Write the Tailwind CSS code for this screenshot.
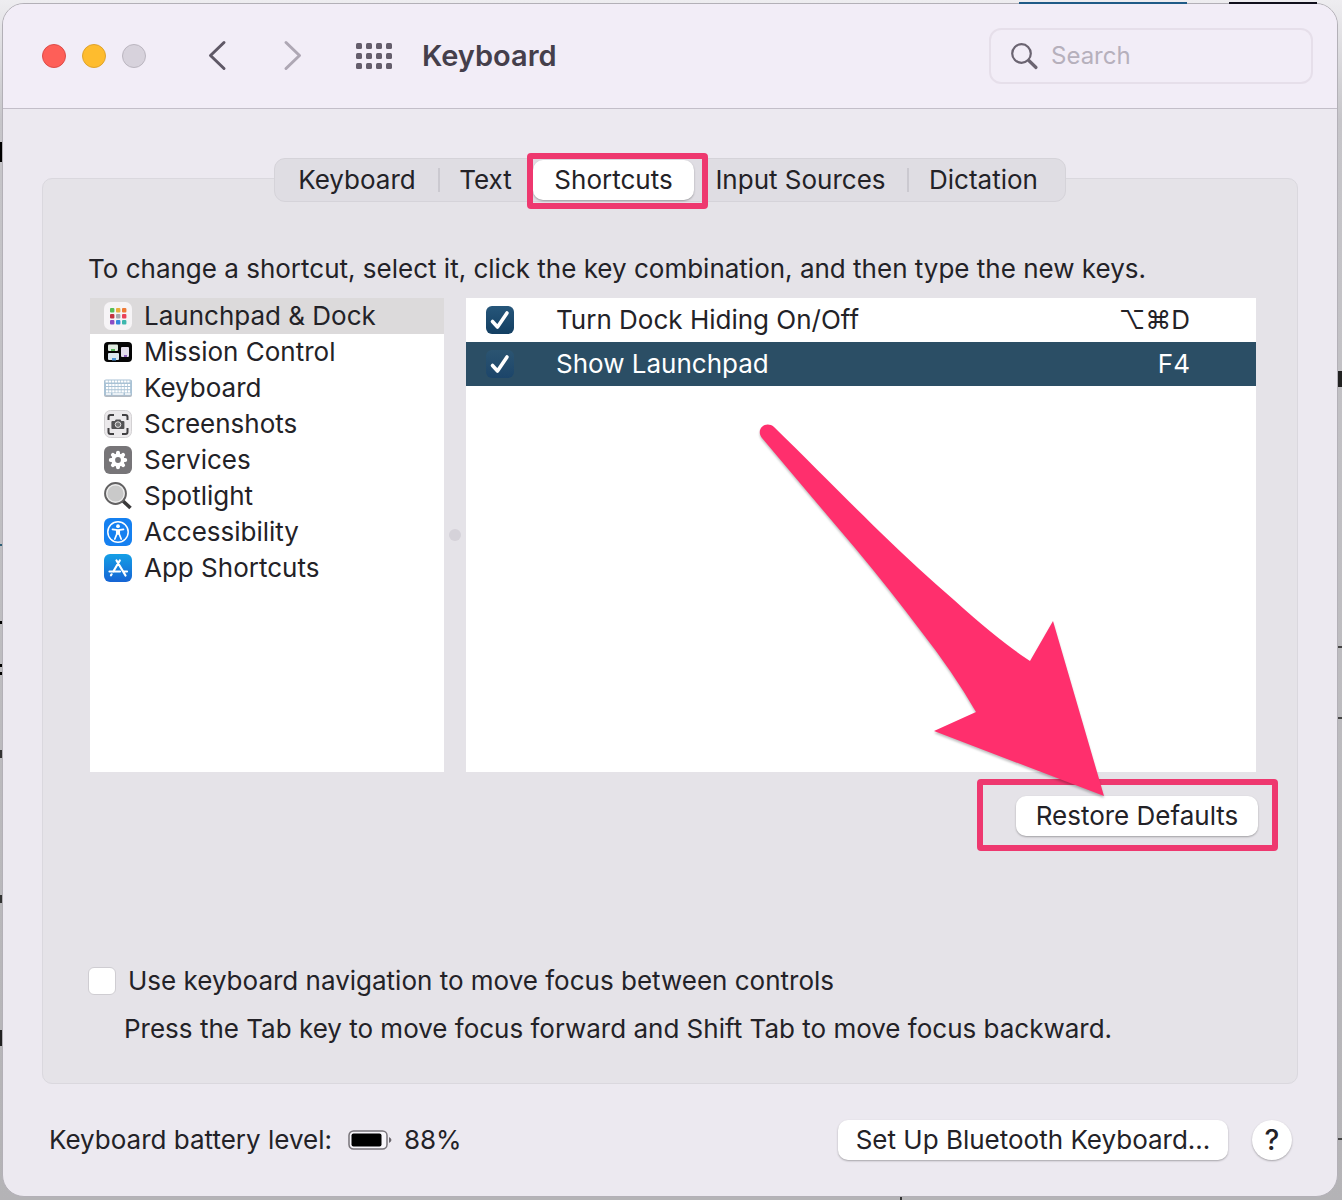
<!DOCTYPE html>
<html lang="en">
<head>
    <meta charset="UTF-8">
    <meta name="viewport" content="width=device-width, initial-scale=1.0">
    <title>Keyboard</title>
    <script src="https://cdn.jsdelivr.net/npm/@tailwindcss/browser@4"></script>
</head>
<body class="relative flex min-h-screen flex-col overflow-x-hidden bg-linear-to-b from-[#eeedf0] from-0% via-[#c6c5c9] via-10% to-[#b4b3b6] pt-[3px] pr-1 pb-[3px] pl-[2px] font-[Inter,sans-serif] text-[26px]/8 text-[#232227]">
    <!-- windows lying behind this one -->
    <div class="absolute top-[2px] right-[155px] z-10 h-[2px] w-[168px] bg-[#1f5b87]"></div>
    <div class="absolute top-[2px] right-[25px] z-10 h-[2px] w-[88px] bg-[#11101c]"></div>
    <div class="absolute top-[142px] left-0 h-5 w-1 bg-black"></div>
    <div class="absolute top-[544px] left-0 h-[2px] w-1 bg-[#2f6078]"></div>
    <div class="absolute top-[621px] left-0 h-[3px] w-1 bg-black"></div>
    <div class="absolute top-[664px] left-0 h-[11px] w-1 border-y-3 border-black"></div>
    <div class="absolute top-[750px] left-0 h-2 w-1 bg-[#333]"></div>
    <div class="absolute top-[895px] left-0 h-2 w-1 bg-[#333]"></div>
    <div class="absolute top-[1030px] left-0 h-4 w-1 bg-[#222]"></div>
    <div class="absolute top-[371px] right-0 h-4 w-1 bg-[#222]"></div>
    <div class="absolute top-[646px] right-0 h-[73px] w-1 border-y-2 border-[#444]"></div>
    <div class="absolute top-[1138px] right-0 h-[2px] w-1 bg-[#444]"></div>
    <div class="absolute bottom-0 left-[900px] h-1 w-[2px] bg-[#333]"></div>

    <div class="relative flex grow flex-col rounded-[22px] border border-[#b3b0b7] bg-[#ece9f0]">
        <header class="flex h-[105px] items-center rounded-t-[21px] border-b border-[#c3bec9] bg-[#f2edf7] pr-6 pl-[39px]">
            <div class="flex gap-4">
                <button class="size-6 rounded-full border border-[#dd4b48] bg-[#fe5f58]" aria-label="Close"></button>
                <button class="size-6 rounded-full border border-[#dfa32c] bg-[#febc2e]" aria-label="Minimize"></button>
                <button class="size-6 rounded-full border border-[#bbb6c0] bg-[#d7d2dc]" aria-label="Zoom"></button>
            </div>
            <button class="ml-[62px]" aria-label="Back">
                <svg class="h-8 w-5" viewBox="0 0 20 32" fill="none" stroke="#5f5866" stroke-width="3" stroke-linecap="round" stroke-linejoin="round"><path d="M16 2.500 2.500 15.500 16 28.500"/></svg>
            </button>
            <button class="ml-[54px]" aria-label="Forward">
                <svg class="h-8 w-5" viewBox="0 0 20 32" fill="none" stroke="#aea7b4" stroke-width="3" stroke-linecap="round" stroke-linejoin="round"><path d="M4 2.500 17.500 15.500 4 28.500"/></svg>
            </button>
            <button class="ml-[54px]" aria-label="Show all">
                <svg class="h-[26px] w-9" viewBox="0 0 36 26" fill="#645d6b">
                    <rect x="0" y="0" width="6" height="6" rx="1.500"/><rect x="10" y="0" width="6" height="6" rx="1.500"/><rect x="20" y="0" width="6" height="6" rx="1.500"/><rect x="30" y="0" width="6" height="6" rx="1.500"/>
                    <rect x="0" y="10" width="6" height="6" rx="1.500"/><rect x="10" y="10" width="6" height="6" rx="1.500"/><rect x="20" y="10" width="6" height="6" rx="1.500"/><rect x="30" y="10" width="6" height="6" rx="1.500"/>
                    <rect x="0" y="20" width="6" height="6" rx="1.500"/><rect x="10" y="20" width="6" height="6" rx="1.500"/><rect x="20" y="20" width="6" height="6" rx="1.500"/><rect x="30" y="20" width="6" height="6" rx="1.500"/>
                </svg>
            </button>
            <h1 class="ml-[30px] text-[29px] font-semibold text-[#453f4b]">Keyboard</h1>
            <label class="ml-auto flex h-14 w-[324px] items-center gap-3 rounded-xl border-2 border-[#e6dfea] pl-5">
                <svg class="size-7 shrink-0" viewBox="0 0 28 28" fill="none" stroke="#6b6471" stroke-linecap="round"><circle cx="10.500" cy="11.500" r="9.300" stroke-width="2.200"/><path d="M17.800 18.500 25 25.500" stroke-width="3.200"/></svg>
                <input type="search" placeholder="Search" aria-label="Search" class="w-full min-w-0 bg-transparent text-2xl outline-none placeholder:text-[#b6b0bc]">
            </label>
        </header>

        <main class="flex grow flex-col px-[39px] pt-[69px]">
            <div class="flex grow flex-col rounded-[10px] border border-[#dad8de] bg-[#e5e3e8] pr-[41px] pb-[38px] pl-[47px]">
                <nav class="-mt-[21px] mr-[6px] flex h-11 items-center self-center rounded-[11px] border border-[#d5d3d9] bg-[#dfdde3] pr-[5px] pl-px">
                    <button class="h-10 w-[162px]">Keyboard</button>
                    <button class="relative h-10 w-[95px] before:absolute before:top-2 before:left-0 before:h-6 before:w-[2px] before:bg-[#cbc9d0]">Text</button>
                    <div class="relative">
                        <button class="h-10 w-[161px] rounded-[10px] bg-white shadow-[0_1px_2px_rgba(0,0,0,0.3)]">Shortcuts</button>
                        <div class="pointer-events-none absolute -top-[7px] -right-[14px] -bottom-[9px] -left-[6px] rounded-sm border-6 border-[#ee386f]"></div>
                    </div>
                    <button class="h-10 w-[213px]">Input Sources</button>
                    <button class="relative h-10 w-[153px] before:absolute before:top-2 before:left-0 before:h-6 before:w-[2px] before:bg-[#cbc9d0]">Dictation</button>
                </nav>

                <p class="mt-[51px] -mr-4 -ml-[2px]">To change a shortcut, select it, click the key combination, and then type the new keys.</p>

                <div class="mt-[13px] flex h-[474px]">
                    <ul class="w-[354px] shrink-0 bg-white">
                        <li><button class="flex h-9 w-full items-center gap-3 bg-[#dcdadb] pl-[14px]">
                            <svg class="size-7" viewBox="0 0 28 28">
                                <rect width="28" height="28" rx="6.500" fill="#f6f4f6"/>
                                <rect x="6" y="6" width="4.400" height="4.400" rx="1" fill="#57bd55"/><rect x="12" y="6" width="4.400" height="4.400" rx="1" fill="#e8ae3c"/><rect x="18" y="6" width="4.400" height="4.400" rx="1" fill="#ee7a36"/>
                                <rect x="6" y="12" width="4.400" height="4.400" rx="1" fill="#c4323f"/><rect x="12" y="12" width="4.400" height="4.400" rx="1" fill="#a8a8ad"/><rect x="18" y="12" width="4.400" height="4.400" rx="1" fill="#ea4259"/>
                                <rect x="6" y="18" width="4.400" height="4.400" rx="1" fill="#8c4cc4"/><rect x="12" y="18" width="4.400" height="4.400" rx="1" fill="#3489dd"/><rect x="18" y="18" width="4.400" height="4.400" rx="1" fill="#3eb7ad"/>
                            </svg>
                            Launchpad &amp; Dock
                        </button></li>
                        <li><button class="flex h-9 w-full items-center gap-3 pl-[14px]">
                            <svg class="size-7" viewBox="0 0 28 28">
                                <rect y="4" width="28" height="20" rx="4" fill="#050505"/>
                                <rect x="4" y="6.500" width="10" height="6.500" rx="1" fill="#dfe9df"/><rect x="7" y="11" width="4" height="2" fill="#58b85c"/>
                                <rect x="17" y="9" width="8" height="10" rx="1" fill="#e3deeb"/><rect x="20" y="17" width="3" height="2" fill="#8e63bb"/>
                                <rect x="4" y="15" width="11" height="7" rx="1" fill="#dce8f0"/><rect x="8" y="20" width="4" height="2.500" fill="#4f96d8"/>
                            </svg>
                            Mission Control
                        </button></li>
                        <li><button class="flex h-9 w-full items-center gap-3 pl-[14px]">
                            <svg class="size-7" viewBox="0 0 28 28">
                                <rect y="6" width="28" height="17" rx="2" fill="#b4bac2"/><rect y="5.500" width="28" height="16" rx="2" fill="#a9c2d5"/>
                                <path d="M1.500 7.500h25M2 11h24.500M2 14.200h24.500M2 17.400h24.500" stroke="#fff" stroke-width="2.200" stroke-dasharray="2.400 .7"/>
                                <path d="M2 20h5M8.500 20h11M21 20h5.500" stroke="#fff" stroke-width="1.500"/>
                            </svg>
                            Keyboard
                        </button></li>
                        <li><button class="flex h-9 w-full items-center gap-3 pl-[14px]">
                            <svg class="size-7" viewBox="0 0 28 28">
                                <rect x=".5" y=".5" width="27" height="27" rx="6" fill="#ebe9eb" stroke="#d3d1d3"/>
                                <path d="M4.500 10V7Q4.500 5 6.500 5H10M18 5h3.500q2 0 2 2v3M23.500 18v4q0 2-2 2H18M10 24H6.500q-2 0-2-2v-4" fill="none" stroke="#403f41" stroke-width="2"/>
                                <path d="M8.500 11h2.300l1-1.600h4.600l1 1.600h2q1 0 1 1v6q0 1-1 1h-11q-1 0-1-1v-6q0-1 1-1z" fill="#535254"/><circle cx="14" cy="14.600" r="2.800" fill="#777" stroke="#e4e2e4"/>
                            </svg>
                            Screenshots
                        </button></li>
                        <li><button class="flex h-9 w-full items-center gap-3 pl-[14px]">
                            <svg class="size-7" viewBox="0 0 28 28">
                                <rect width="28" height="28" rx="6" fill="#777578"/>
                                <g stroke="#fff" stroke-width="4" stroke-linecap="round"><path d="M14 6.800v14.400M6.800 14h14.400M8.900 8.900l10.200 10.200M19.100 8.900 8.900 19.100"/></g>
                                <circle cx="14" cy="14" r="6.600" fill="#fff"/><circle cx="14" cy="14" r="2.900" fill="#777578"/>
                            </svg>
                            Services
                        </button></li>
                        <li><button class="flex h-9 w-full items-center gap-3 pl-[14px]">
                            <svg class="size-7" viewBox="0 0 28 28">
                                <path d="m19 19 7.500 7" stroke="#3a393a" stroke-width="3.600"/>
                                <circle cx="11.500" cy="11.500" r="10.400" fill="#c9c9c9" stroke="#626162" stroke-width="2"/><circle cx="11.500" cy="11.500" r="8.700" fill="none" stroke="#ededed" stroke-width="1.200"/>
                            </svg>
                            Spotlight
                        </button></li>
                        <li><button class="flex h-9 w-full items-center gap-3 pl-[14px]">
                            <svg class="size-7" viewBox="0 0 28 28">
                                <rect width="28" height="28" rx="6" fill="#1580f0"/>
                                <circle cx="14" cy="14" r="10.200" fill="none" stroke="#fff" stroke-width="1.500"/>
                                <circle cx="14" cy="8.200" r="1.900" fill="#fff"/>
                                <path d="M8.500 11.300 14 12.200l5.500-.9M14 12v4M12.800 12.500v3.500l-2 5M15.200 12.500v3.500l2 5" fill="none" stroke="#fff" stroke-width="1.700" stroke-linecap="round"/>
                            </svg>
                            Accessibility
                        </button></li>
                        <li><button class="flex h-9 w-full items-center gap-3 pl-[14px]">
                            <svg class="size-7" viewBox="0 0 28 28">
                                <defs><linearGradient id="store" x2="0" y2="1"><stop stop-color="#149fe6"/><stop offset="1" stop-color="#1664d4"/></linearGradient></defs>
                                <rect width="28" height="28" rx="6" fill="url(#store)"/>
                                <path d="M12.500 6.500 21.500 21.500M15.800 6.500 9.300 17.500M5.500 17.500H16M20 17.500h3M7.600 20.300l-.6 1" stroke="#fff" stroke-width="2.200" stroke-linecap="round"/>
                            </svg>
                            App Shortcuts
                        </button></li>
                    </ul>

                    <div class="flex w-[22px] shrink-0 items-center justify-center">
                        <div class="size-3 rounded-full bg-[#d5d2d9]"></div>
                    </div>

                    <div class="grow bg-white">
                        <table class="w-full">
                            <tr class="h-11">
                                <td class="w-[90px] pl-5">
                                    <div class="relative size-7">
                                        <input type="checkbox" id="hiding" checked class="block size-7 appearance-none rounded-md bg-linear-to-b from-[#26567a] to-[#133f62]">
                                        <svg class="pointer-events-none absolute inset-0" viewBox="0 0 28 28" fill="none" stroke="#fff" stroke-width="3.600" stroke-linecap="round" stroke-linejoin="round"><path d="m6.500 15.500 5 5.500 9.500-14"/></svg>
                                    </div>
                                </td>
                                <td><label for="hiding">Turn Dock Hiding On/Off</label></td>
                                <td class="pr-[66px] text-right">⌥⌘D</td>
                            </tr>
                            <tr class="h-11 bg-[#2b4e65] text-white">
                                <td class="w-[90px] pl-5">
                                    <div class="relative size-7">
                                        <input type="checkbox" id="launchpad" checked class="block size-7 appearance-none rounded-md bg-linear-to-b from-[#2b5471] to-[#1c456a]">
                                        <svg class="pointer-events-none absolute inset-0" viewBox="0 0 28 28" fill="none" stroke="#fff" stroke-width="3.600" stroke-linecap="round" stroke-linejoin="round"><path d="m6.500 15.500 5 5.500 9.500-14"/></svg>
                                    </div>
                                </td>
                                <td><label for="launchpad">Show Launchpad</label></td>
                                <td class="pr-[66px] text-right">F4</td>
                            </tr>
                        </table>
                    </div>
                </div>

                <div class="relative mt-6 -mr-[2px] self-end">
                    <div class="pointer-events-none absolute -top-[17px] -right-5 -bottom-[15px] -left-[39px] rounded-sm border-6 border-[#ee386f]"></div>
                    <button class="relative h-10 w-[242px] rounded-[10px] bg-white shadow-[0_1px_2px_rgba(0,0,0,0.3)]">Restore Defaults</button>
                    <!-- arrow pointing at the button -->
                    <svg class="pointer-events-none absolute right-[154px] bottom-full h-[376px] w-[348px] drop-shadow-[0_2px_1px_rgba(0,0,0,0.25)]" viewBox="756 420 348 376" fill="#ff2f6d">
                        <path d="M774 427C811 463 840 493 880 532Q918 569 954 600 998 640 1030 661L1053 621 1104 796 934 731 976 712Q953 672 920 630 890 590 855 548 815 501 762 438C755 429 766 420 774 427Z"/>
                    </svg>
                </div>

                <div class="mt-auto -ml-[2px] flex items-center gap-3">
                    <input type="checkbox" id="nav" class="size-7 appearance-none rounded-md border border-[#cfcdd2] bg-white">
                    <label for="nav">Use keyboard navigation to move focus between controls</label>
                </div>
                <p class="mt-4 ml-[34px]">Press the Tab key to move focus forward and Shift Tab to move focus backward.</p>
            </div>
        </main>

        <footer class="flex items-center py-9 pr-[45px] pl-[46px]">
            <span>Keyboard battery level:</span>
            <svg class="ml-4 h-5 w-11" viewBox="0 0 44 20" fill="none">
                <rect x="1" y="1" width="38" height="18" rx="4.500" fill="#f7f5fa" stroke="#777379" stroke-width="1.500"/>
                <rect x="3.500" y="3.500" width="30" height="13" rx="2" fill="#000"/>
                <path d="M41 7q5 3 0 6z" fill="#6b676e"/>
            </svg>
            <span class="ml-3">88%</span>
            <button class="ml-auto h-10 w-[390px] rounded-[10px] bg-white shadow-[0_1px_2px_rgba(0,0,0,0.3)]">Set Up Bluetooth Keyboard...</button>
            <button class="ml-6 size-10 rounded-full bg-white text-[28px] font-medium shadow-[0_1px_2px_rgba(0,0,0,0.3)]" aria-label="Help">?</button>
        </footer>
    </div>
</body>
</html>
